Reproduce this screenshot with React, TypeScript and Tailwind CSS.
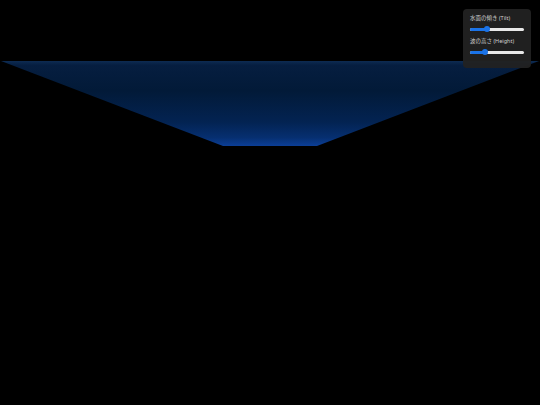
import React from "react";

const sliders = [
  { label: "水面の傾き (Tilt)", value: 32 },
  { label: "波の高さ (Height)", value: 28 },
];

const Slider = ({ value }: { value: number }) => (
  <div className="relative h-[6px] w-full flex items-center">
    <div className="h-[3px] w-full rounded-full bg-[#e8e8e8]" />
    <div
      className="absolute left-0 h-[3px] rounded-full bg-[#1a73e8]"
      style={{ width: `${value}%` }}
    />
    <div
      className="absolute h-[6px] w-[6px] -translate-x-1/2 rounded-full bg-[#1a73e8]"
      style={{ left: `${value}%` }}
    />
  </div>
);

export default function App() {
  return (
    <div
      className="relative h-[405px] w-[540px] overflow-hidden bg-black"
      style={{ fontFamily: '"Noto Sans", "Noto Sans CJK JP", sans-serif' }}
    >
      <svg className="absolute inset-0" width="540" height="405">
        <defs>
          <linearGradient id="water" x1="0" y1="61" x2="0" y2="146" gradientUnits="userSpaceOnUse">
            <stop offset="0" stopColor="#0d2b52" />
            <stop offset="0.05" stopColor="#061e40" />
            <stop offset="0.35" stopColor="#021a38" />
            <stop offset="0.72" stopColor="#032352" />
            <stop offset="0.9" stopColor="#062f70" />
            <stop offset="1" stopColor="#0b3e96" />
          </linearGradient>
        </defs>
        <polygon points="1,61 539,61 317,146 223,146" fill="url(#water)" />
      </svg>

      <div className="absolute right-[9px] top-[9px] flex h-[59px] w-[68px] flex-col gap-[6px] rounded-[4px] bg-[#222222]/95 px-[7px] pt-[6px]">
        {sliders.map((s) => (
          <div key={s.label} className="flex flex-col gap-[4px]">
            <span className="text-[5.5px] leading-[7px] text-[#d0d0d0]">{s.label}</span>
            <Slider value={s.value} />
          </div>
        ))}
      </div>
    </div>
  );
}
